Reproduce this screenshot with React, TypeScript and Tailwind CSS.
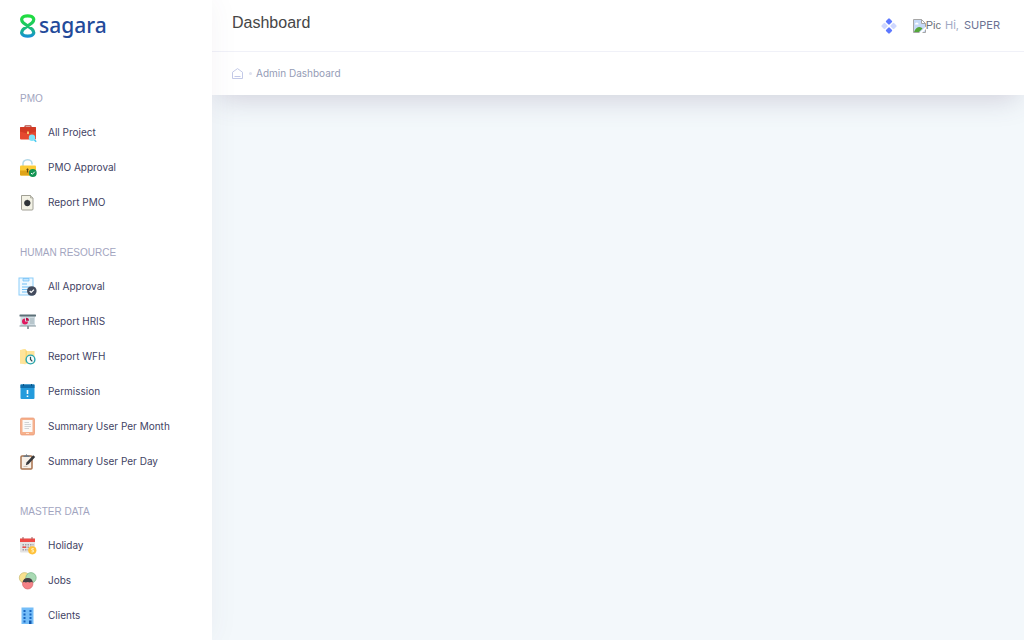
import React from "react";

type IconName =
  | "briefcase" | "lock" | "report" | "approval" | "board" | "folder"
  | "permission" | "book" | "clipboard" | "calendar" | "jobs" | "building";

const art: Record<IconName, React.ReactNode> = {
  briefcase: (
    <>
      <path d="M6 4V2.400Q6 1.800 6.700 1.800h4.600q.7 0 .7.6V4" fill="none" stroke="#b5473c" strokeWidth="1.200" />
      <rect x="1" y="3" width="16" height="12.500" rx="1" fill="#e5492f" />
      <path d="M1 4q0-1 1-1h14q1 0 1 1v3.500l-7 2H8l-7-2z" fill="#d23a24" />
      <rect x="8" y="7.500" width="2" height="2.500" fill="#f9c56b" />
      <path d="m14.500 15 2.700 2.700" stroke="#4cc9ee" strokeWidth="1.600" />
      <circle cx="13" cy="13.700" r="3.200" fill="#7fe4fa" />
    </>
  ),
  lock: (
    <>
      <path d="M4 7V4.500a4.500 3.700 0 0 1 9-.3V5.500" fill="none" stroke="#b3d8e8" strokeWidth="1.500" />
      <rect x="1" y="6.500" width="16" height="10" rx="1" fill="#fbcb38" />
      <path d="M1 11.500h16V15.500q0 1-1 1H2q-1 0-1-1z" fill="#dfa41a" />
      <path d="M8.500 9.500v4M7.500 10.500h2" stroke="#5b4714" strokeWidth="1.200" />
      <circle cx="13.800" cy="14" r="3.900" fill="#129453" />
      <path d="m12 14 1.300 1.300 2.500-2.600" fill="none" stroke="#fff" />
    </>
  ),
  report: (
    <>
      <path d="M2.500 1.500h9L14 4v11q0 1-1 1H3.500q-1 0-1-1z" fill="#f3f2e5" stroke="#96958a" strokeWidth=".9" />
      <path d="M11.500 1.500V4H14" fill="#d5d4c7" stroke="#96958a" strokeWidth=".6" />
      <circle cx="8.300" cy="9" r="3.100" fill="#303438" />
      <path d="M8.300 5.500V12.500M5 9h6.600" stroke="#303438" strokeWidth=".5" />
    </>
  ),
  approval: (
    <>
      <rect x="0" y="0" width="14" height="17" fill="#f0f9ff" stroke="#8bcdf9" />
      <path d="M4 .5h6V3H4z" fill="#c4e6ff" stroke="#6dbdf5" strokeWidth=".7" />
      <path d="M3 6h5M3 9h8M3 11.500h6M3 14h5" stroke="#6dbdf5" />
      <circle cx="12.800" cy="13" r="4.800" fill="#434b5d" />
      <path d="m10.700 13 1.500 1.500 2.800-2.900" fill="none" stroke="#fff" strokeWidth="1.200" />
    </>
  ),
  board: (
    <>
      <path d="M9 13v3" stroke="#596970" strokeWidth="1.300" />
      <rect x="1.500" y="3" width="14.500" height="10" fill="#d0dce2" />
      <rect x=".5" y="1.500" width="16.500" height="2" rx=".5" fill="#5d7078" />
      <path d="M.5 13H17" stroke="#84959c" />
      <path d="M6 5.500a3 3 0 1 0 3 3H6z" fill="#e0195f" />
      <path d="M7 4.700v3h3a3 3 0 0 0-3-3z" fill="#b50c44" />
      <path d="M11 6h4M11 8h4M11 10h4" stroke="#9aaab1" strokeWidth=".9" />
    </>
  ),
  folder: (
    <>
      <path d="M1 2.500 6 1l2 2h7v12.500H1z" fill="#f9d774" />
      <path d="m1 2 5.500-1v15.500L1 15zM8 3h7.500v12H8z" fill="#ffe49a" />
      <circle cx="11.500" cy="11.500" r="4.400" fill="#f3fcfc" stroke="#24a4b0" strokeWidth="1.400" />
      <path d="M11.500 8.800v2.700l1.800 1.800" fill="none" stroke="#34474d" strokeWidth="1.200" />
    </>
  ),
  permission: (
    <>
      <rect x="1.500" y="1.500" width="14" height="14.500" rx="1" fill="#249bdc" />
      <path d="M1.500 1.500h14V5h-14z" fill="#116fac" />
      <path d="M4.500 1v2M12.500 1v2" stroke="#0c5588" />
      <path d="M8.500 7v4M8.500 12.500V14" stroke="#fff" strokeWidth="1.600" />
    </>
  ),
  book: (
    <>
      <rect x="1.500" y="0" width="14" height="17" rx="1.500" fill="#f6b18c" stroke="#e99773" strokeWidth=".7" />
      <path d="M3.500 2h10v12h-10z" fill="#faf9f8" />
      <path d="M5.500 4.500H10M5.500 6.500H12M5.500 8.500H12M5.500 10.500H10" stroke="#c7c9cc" strokeWidth=".8" />
      <path d="M7 15.500h3" stroke="#ffe1ce" />
    </>
  ),
  clipboard: (
    <>
      <rect x="2" y="3" width="11" height="13" rx="1" fill="#f7f0e8" stroke="#a9734e" strokeWidth="1.500" />
      <path d="M4.500 4V2.500h2l1-1.500 1 1.500h2V4z" fill="#6d7b88" />
      <path d="m7.500 9.500 6.700-7.300 2 1.700-6.700 7.300-2.700 1z" fill="#36383c" />
      <path d="M4.500 13.500h4" stroke="#c6b9ad" strokeWidth=".8" />
    </>
  ),
  calendar: (
    <>
      <rect x="1" y="1.500" width="15" height="14" rx="1" fill="#e4e3e3" />
      <path d="M1 1.500h15V5H1z" fill="#ef4b46" />
      <path d="M4 0v2.500M13 0v2.500" stroke="#a35454" />
      <path d="M3.500 7.700h11M3.500 10.200h11M3.500 12.700h6" stroke="#a3a1a4" strokeWidth="1.500" strokeDasharray="1.500 1" />
      <path d="M3.500 10.200H7" stroke="#ef4b46" strokeWidth="1.500" />
      <circle cx="13.300" cy="13.300" r="4.100" fill="#ffc13a" />
      <path d="M14.800 11.700h-2v1.400q2-.2 2 1t-2.300.8" fill="none" stroke="#fff4c4" />
    </>
  ),
  jobs: (
    <>
      <circle cx="5.500" cy="5.800" r="5.200" fill="#f9e18e" stroke="#c9b96f" strokeWidth=".7" />
      <circle cx="12" cy="5.800" r="5.200" fill="#a9dab4" stroke="#78b688" strokeWidth=".7" />
      <circle cx="8.700" cy="11.800" r="5.200" fill="#f58286" stroke="#d5686c" strokeWidth=".7" />
      <path d="M3.700 10.300a5.100 5.100 0 0 1 10.100 0q-2-.8-3.100.2-2-1-4 0-1-1-3-.2z" fill="#414144" />
    </>
  ),
  building: (
    <>
      <rect x="2.500" y=".5" width="12" height="16.500" fill="#74bdf8" />
      <path d="M4.500 4h2M10.500 4h2M4.500 7.500h2M10.500 7.500h2M4.500 11h2M10.500 11h2M4.500 14.500h2" stroke="#1565c0" strokeWidth="2" />
      <path d="M10 13.500h2.500V17H10z" fill="#1257ad" />
    </>
  ),
};

const sections: { title: string; items: { label: string; icon: IconName }[] }[] = [
  {
    title: "PMO",
    items: [
      { label: "All Project", icon: "briefcase" },
      { label: "PMO Approval", icon: "lock" },
      { label: "Report PMO", icon: "report" },
    ],
  },
  {
    title: "HUMAN RESOURCE",
    items: [
      { label: "All Approval", icon: "approval" },
      { label: "Report HRIS", icon: "board" },
      { label: "Report WFH", icon: "folder" },
      { label: "Permission", icon: "permission" },
      { label: "Summary User Per Month", icon: "book" },
      { label: "Summary User Per Day", icon: "clipboard" },
    ],
  },
  {
    title: "MASTER DATA",
    items: [
      { label: "Holiday", icon: "calendar" },
      { label: "Jobs", icon: "jobs" },
      { label: "Clients", icon: "building" },
    ],
  },
];

function Logo() {
  return (
    <a href="#" className="flex h-[52px] items-center gap-[3px] pl-5">
      <svg width="16" height="24" viewBox="0 0 16 24" fill="none" aria-hidden="true">
        <defs>
          <linearGradient id="mark" x1="8" y1="0" x2="8" y2="24" gradientUnits="userSpaceOnUse">
            <stop offset=".1" stopColor="#20dc40" />
            <stop offset=".5" stopColor="#1cc566" />
            <stop offset="1" stopColor="#148be0" />
          </linearGradient>
        </defs>
        <path
          d="M3.200 8.700C.2 5.400 1.700 1.800 7.700 1.800s7.500 3.600 4.500 6.900l-9 6.600c-3 3.300-1.500 6.900 4.500 6.900s7.500-3.600 4.500-6.900z"
          stroke="url(#mark)"
          strokeWidth="3.200"
          strokeLinejoin="round"
        />
      </svg>
      <span className="pb-[2px] font-['Noto_Sans',sans-serif] text-[21px] leading-6 font-medium text-[#234a9a]">sagara</span>
    </a>
  );
}

function Sidebar() {
  return (
    <aside className="z-10 w-[212px] shrink-0 bg-white shadow-[0_0_28px_rgba(82,63,105,0.06)]">
      <Logo />
      <nav className="flex flex-col gap-[15px] pt-[29px]">
        {sections.map((section) => (
          <section key={section.title}>
            <h2 className="flex h-[34px] items-center px-5 text-[10px] text-[#a2a5c0]">{section.title}</h2>
            <ul>
              {section.items.map((item) => (
                <li key={item.label}>
                  <a
                    href="#"
                    className="flex h-[35px] items-center gap-[11px] pl-[19px] font-['Inter','Liberation_Sans',sans-serif] text-[10px] text-[#3f4364]"
                  >
                    <svg width="18" height="18" viewBox="0 0 18 18" className="shrink-0 overflow-visible" aria-hidden="true">
                      {art[item.icon]}
                    </svg>
                    {item.label}
                  </a>
                </li>
              ))}
            </ul>
          </section>
        ))}
      </nav>
    </aside>
  );
}

function Header() {
  return (
    <header className="bg-white shadow-[0_10px_28px_-6px_rgba(82,63,105,0.22)]">
      <div className="flex h-[52px] items-center justify-between border-b border-[#f0f1f8] pr-6 pl-5">
        <h1 className="pb-[6px] text-base text-[#464646]">Dashboard</h1>
        <div className="flex items-center">
          <button type="button" aria-label="Quick actions" className="mr-4">
            <svg width="16" height="16" viewBox="0 0 16 16" strokeWidth="2.200" strokeLinejoin="round">
              <path d="m8 1.500 2 2-2 2-2-2zM8 10.500l2 2-2 2-2-2z" fill="#5d78ff" stroke="#5d78ff" />
              <path d="m3.500 6 2 2-2 2-2-2zM12.500 6l2 2-2 2-2-2z" fill="#ced7ff" stroke="#ced7ff" />
            </svg>
          </button>
          <a href="#" className="flex items-center font-['Inter','Liberation_Sans',sans-serif] text-[11px]">
            <svg width="13" height="14" viewBox="0 0 13 14" aria-hidden="true">
              <path d="M.5.5h8l4 4v9H.5z" fill="#c5d9f7" stroke="#a6a6a6" />
              <path d="M8.500.5v4h4z" fill="#fff" stroke="#a6a6a6" />
              <path d="M2 5.500q0-2 1.800-2t1.800 2z" fill="#fff" />
              <path d="M1 13q2-5 5.500-5 2 0 3 1.500L6 13z" fill="#55a63a" />
              <path d="M6 14 13 7.500V10l-4 4z" fill="#fff" />
            </svg>
            <span className="font-['Liberation_Sans',sans-serif] text-[#6c6f78]">Pic</span>
            <span className="ml-1 text-[#a1a8c3]">Hi,</span>
            <span className="ml-[5px] text-[#6c7293]">SUPER</span>
          </a>
        </div>
      </div>
      <nav
        aria-label="Breadcrumb"
        className="flex h-[43px] items-center pl-5 font-['Inter','Liberation_Sans',sans-serif] text-[10px] text-[#959cb6]"
      >
        <a href="#" aria-label="Home">
          <svg width="11" height="11" viewBox="0 0 11 11" fill="none" stroke="#c3c9e7">
            <path d="M.5 4.200 5.500.6l5 3.600v6.300H.5zM2.500 8.500h6" />
          </svg>
        </a>
        <span className="mr-1 ml-[6px] size-[3px] rounded-full bg-[#dfe2f0]" />
        <a href="#">Admin Dashboard</a>
      </nav>
    </header>
  );
}

export default function App() {
  return (
    <div className="flex h-screen overflow-hidden bg-[#f3f8fb] font-['Liberation_Sans',Arial,sans-serif]">
      <Sidebar />
      <main className="min-w-0 flex-1">
        <Header />
      </main>
    </div>
  );
}
